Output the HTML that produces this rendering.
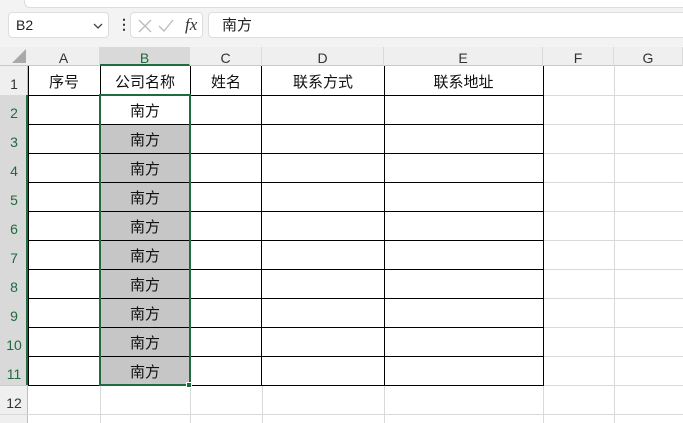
<!DOCTYPE html><html><head><meta charset="utf-8"><style>
*{margin:0;padding:0;box-sizing:border-box}
body{width:683px;height:423px;overflow:hidden;background:#fff;font-family:"Liberation Sans","Noto Sans CJK SC",sans-serif;position:relative}
.a{position:absolute}
.hl{position:absolute;height:1px;background:#d9d9d9}
.vl{position:absolute;width:1px;background:#d9d9d9}
.ch{position:absolute;top:47px;height:19px;font-size:14px;color:#333;text-align:center;line-height:22px;border-right:1px solid #dadada}
.rh{position:absolute;left:0;width:28px;height:29px;font-size:14px;color:#333;text-align:center;line-height:37px}
.c{position:absolute;font-size:15px;color:#111;text-align:center;height:29px;line-height:33px}
</style></head><body>
<div class="a" style="left:0;top:0;width:683px;height:66px;background:#f3f3f3"></div>
<div class="a" style="left:24px;top:-6px;width:670px;height:14px;background:#fff;border:1px solid #ddd;border-radius:6px"></div>
<div class="a" style="left:8px;top:12px;width:101px;height:26px;background:#fff;border:1px solid #ddd;border-radius:4px;font-size:14px;line-height:24px;padding-left:7px;color:#222">B2<svg class="a" style="left:84px;top:9px" width="10" height="8"><path d="M1 2l4 4 4-4" stroke="#444" stroke-width="1.3" fill="none"/></svg></div>
<div class="a" style="left:117px;top:16px;font-size:14px;color:#333;font-weight:bold">&#8942;</div>
<div class="a" style="left:130px;top:12px;width:73px;height:26px;background:#fff;border:1px solid #ddd;border-radius:4px">
<svg width="73" height="26" style="position:absolute;left:0;top:0"><path d="M8 7l12 12M20 7L8 19" stroke="#bbb" stroke-width="1.3" fill="none"/><path d="M28 13l5 5 9-11" stroke="#bbb" stroke-width="1.3" fill="none"/></svg>
<span class="a" style="left:54px;top:2px;font-family:'Liberation Serif',serif;font-style:italic;font-size:17px;color:#333">fx</span></div>
<div class="a" style="left:208px;top:12px;width:480px;height:26px;background:#fff;border:1px solid #ddd;border-radius:4px;font-size:15px;line-height:25px;padding-left:13px;color:#222">南方</div>
<div class="a" style="left:0;top:47px;width:683px;height:19px;background:#efefef;border-bottom:1px solid #c8c8c8"></div>
<svg class="a" style="left:12px;top:49px" width="14" height="14"><path d="M14 0V14H0Z" fill="#a9a9a9"/></svg>
<div class="ch" style="left:28px;width:72px">A</div>
<div class="ch" style="left:100px;width:90px;background:#d9d9d9;color:#1e6b3e;border-bottom:2px solid #1e6b3e">B</div>
<div class="ch" style="left:190px;width:72px">C</div>
<div class="ch" style="left:262px;width:122px">D</div>
<div class="ch" style="left:384px;width:159px">E</div>
<div class="ch" style="left:543px;width:71px">F</div>
<div class="ch" style="left:614px;width:69px">G</div>
<div class="a" style="left:0;top:66px;width:28px;height:357px;background:#efefef;border-right:1px solid #bdbdbd"></div>
<div class="a" style="left:0;top:95px;width:28px;height:290px;background:#d9d9d9;border-right:2px solid #1e6b3e"></div>
<div class="vl" style="left:100px;top:385px;height:38px"></div>
<div class="vl" style="left:190px;top:385px;height:38px"></div>
<div class="vl" style="left:262px;top:385px;height:38px"></div>
<div class="vl" style="left:384px;top:385px;height:38px"></div>
<div class="vl" style="left:543px;top:66px;height:357px"></div>
<div class="vl" style="left:614px;top:66px;height:357px"></div>
<div class="hl" style="left:543px;top:95px;width:140px"></div><div class="hl" style="left:543px;top:124px;width:140px"></div><div class="hl" style="left:543px;top:153px;width:140px"></div><div class="hl" style="left:543px;top:182px;width:140px"></div><div class="hl" style="left:543px;top:211px;width:140px"></div><div class="hl" style="left:543px;top:240px;width:140px"></div><div class="hl" style="left:543px;top:269px;width:140px"></div><div class="hl" style="left:543px;top:298px;width:140px"></div><div class="hl" style="left:543px;top:327px;width:140px"></div><div class="hl" style="left:543px;top:356px;width:140px"></div><div class="hl" style="left:543px;top:385px;width:140px"></div>
<div class="hl" style="left:0;top:414px;width:683px"></div>
<div class="hl" style="left:0;top:385px;width:28px;background:#ccc"></div>
<div class="a" style="left:100px;top:124px;width:90px;height:261px;background:#c6c6c6"></div>
<div class="a" style="left:28px;top:66px;width:516px;height:320px;border:1px solid #000;border-top:none"></div>
<div class="a" style="left:100px;top:66px;width:1px;height:320px;background:#000"></div>
<div class="a" style="left:190px;top:66px;width:1px;height:320px;background:#000"></div>
<div class="a" style="left:261px;top:66px;width:1px;height:320px;background:#000"></div>
<div class="a" style="left:384px;top:66px;width:1px;height:320px;background:#000"></div>
<div class="a" style="left:28px;top:95px;width:516px;height:1px;background:#000"></div>
<div class="a" style="left:28px;top:124px;width:516px;height:1px;background:#000"></div>
<div class="a" style="left:28px;top:153px;width:516px;height:1px;background:#000"></div>
<div class="a" style="left:28px;top:182px;width:516px;height:1px;background:#000"></div>
<div class="a" style="left:28px;top:211px;width:516px;height:1px;background:#000"></div>
<div class="a" style="left:28px;top:240px;width:516px;height:1px;background:#000"></div>
<div class="a" style="left:28px;top:269px;width:516px;height:1px;background:#000"></div>
<div class="a" style="left:28px;top:298px;width:516px;height:1px;background:#000"></div>
<div class="a" style="left:28px;top:327px;width:516px;height:1px;background:#000"></div>
<div class="a" style="left:28px;top:356px;width:516px;height:1px;background:#000"></div>
<div class="a" style="left:99px;top:94px;width:92px;height:292px;border:2px solid #1e6b3e"></div>
<div class="a" style="left:186px;top:382px;width:6px;height:6px;background:#1e6b3e;border:1px solid #fff"></div>
<div class="rh" style="top:66px">1</div>
<div class="rh" style="top:95px;color:#1e6b3e">2</div>
<div class="rh" style="top:124px;color:#1e6b3e">3</div>
<div class="rh" style="top:153px;color:#1e6b3e">4</div>
<div class="rh" style="top:182px;color:#1e6b3e">5</div>
<div class="rh" style="top:211px;color:#1e6b3e">6</div>
<div class="rh" style="top:240px;color:#1e6b3e">7</div>
<div class="rh" style="top:269px;color:#1e6b3e">8</div>
<div class="rh" style="top:298px;color:#1e6b3e">9</div>
<div class="rh" style="top:327px;color:#1e6b3e">10</div>
<div class="rh" style="top:356px;color:#1e6b3e">11</div>
<div class="rh" style="top:385px">12</div>
<div class="c" style="left:28px;top:66px;width:72px">序号</div>
<div class="c" style="left:100px;top:66px;width:90px">公司名称</div>
<div class="c" style="left:190px;top:66px;width:72px">姓名</div>
<div class="c" style="left:262px;top:66px;width:122px">联系方式</div>
<div class="c" style="left:384px;top:66px;width:159px">联系地址</div>
<div class="c" style="left:100px;top:95px;width:90px">南方</div>
<div class="c" style="left:100px;top:124px;width:90px">南方</div>
<div class="c" style="left:100px;top:153px;width:90px">南方</div>
<div class="c" style="left:100px;top:182px;width:90px">南方</div>
<div class="c" style="left:100px;top:211px;width:90px">南方</div>
<div class="c" style="left:100px;top:240px;width:90px">南方</div>
<div class="c" style="left:100px;top:269px;width:90px">南方</div>
<div class="c" style="left:100px;top:298px;width:90px">南方</div>
<div class="c" style="left:100px;top:327px;width:90px">南方</div>
<div class="c" style="left:100px;top:356px;width:90px">南方</div>
</body></html>
